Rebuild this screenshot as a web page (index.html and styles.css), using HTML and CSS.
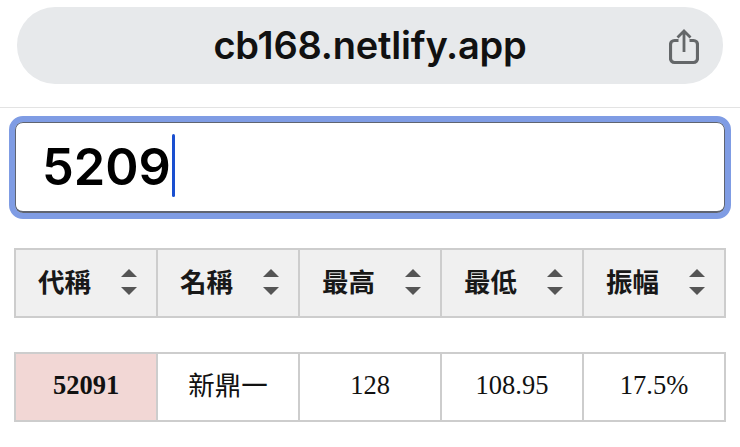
FILE: index.html
```html
<!DOCTYPE html>
<html lang="zh-Hant">
<head>
<meta charset="utf-8">
<title>cb168.netlify.app</title>
<link rel="stylesheet" href="styles.css">
</head>
<body>
<header class="browser">
  <div class="urlbar">
    <span class="url">cb168.netlify.app</span>
    <svg class="share" viewBox="0 0 30 36" width="30" height="36" aria-hidden="true">
      <path d="M9.500 11.500H5.500a4 4 0 0 0-4 4v14a4 4 0 0 0 4 4h19a4 4 0 0 0 4-4v-14a4 4 0 0 0-4-4h-4" fill="none" stroke="#646769" stroke-width="3.200"/>
      <path d="M15 23V2.500M8.500 8.500 15 2l6.500 6.500" fill="none" stroke="#646769" stroke-width="2.800"/>
    </svg>
  </div>
</header>
<main class="content">
  <div class="search"><span class="typed">5209</span><span class="caret"></span></div>
  <table class="grid head">
    <tr>
      <th><div class="th"><span>代稱</span><span class="sort"><i class="up"></i><i class="down"></i></span></div></th>
      <th><div class="th"><span>名稱</span><span class="sort"><i class="up"></i><i class="down"></i></span></div></th>
      <th><div class="th"><span>最高</span><span class="sort"><i class="up"></i><i class="down"></i></span></div></th>
      <th><div class="th"><span>最低</span><span class="sort"><i class="up"></i><i class="down"></i></span></div></th>
      <th><div class="th"><span>振幅</span><span class="sort"><i class="up"></i><i class="down"></i></span></div></th>
    </tr>
  </table>
  <table class="grid body">
    <tr>
      <td class="code">52091</td>
      <td class="name">新鼎一</td>
      <td>128</td>
      <td>108.95</td>
      <td>17.5%</td>
    </tr>
  </table>
</main>
</body>
</html>
```
FILE: styles.css
```css
* { box-sizing: border-box; }
html, body { margin: 0; height: 447px; overflow: hidden; background: #fff; }
body { font-family: "Liberation Serif", "Noto Sans CJK TC", serif; color: #111; }

.browser { height: 108px; padding: 7px 17px 0; border-bottom: 1px solid #e3e3e3; }
.urlbar {
  height: 77px;
  border-radius: 38px;
  background: #e7e9eb;
  display: flex;
  align-items: center;
  justify-content: center;
  position: relative;
}
.url {
  font-family: "Inter", "Liberation Sans", sans-serif;
  font-size: 38px;
  font-weight: 600;
  letter-spacing: -0.2px;
  color: #111;
  margin-top: -2px;
}
.share { position: absolute; right: 24px; top: 22px; }

.content { padding: 8px 14px 0; }
.search {
  height: 103px;
  margin: 0 -5px;
  border: 6px solid #7f9ce4;
  border-radius: 14px;
  background: #fff;
  box-shadow: inset 0 1px 0 #5f6470, inset 0 -2px 0 #5f6470, inset 1px 0 0 #5f6470, inset -1px 0 0 #5f6470;
  padding-left: 27px;
  display: flex;
  align-items: center;
}
.typed {
  font-family: "Inter", "Liberation Sans", sans-serif;
  font-size: 50.500px;
  font-weight: 600;
  color: #000;
  line-height: 1;
}
.caret { width: 3px; height: 63px; margin-left: 1px; margin-top: -5px; background: #1a4fd0; border-radius: 2px; }

.grid { width: 712px; table-layout: fixed; border-collapse: collapse; }
.grid th, .grid td { border: 2px solid #cdcdcd; height: 68px; padding: 0; }
.head { margin-top: 29px; }
.body { margin-top: 34px; }
.head th { background: #f0f0f0; }
.th {
  display: flex;
  align-items: center;
  justify-content: space-between;
  padding: 0 19px 0 22px;
  font-family: "Noto Sans CJK TC", sans-serif;
  font-size: 26.500px;
  font-weight: 700;
  color: #181818;
}
.th > span:first-child { margin-top: -6px; }
.sort { display: flex; flex-direction: column; gap: 10px; margin-top: -3px; }
.sort i { display: block; width: 0; height: 0; border-left: 8.500px solid transparent; border-right: 8.500px solid transparent; }
.up { border-bottom: 8.500px solid #555; }
.down { border-top: 8.500px solid #555; }

.body td { text-align: center; font-size: 26.500px; color: #111; padding-bottom: 3px; }
.body .code { background: #f2d7d5; font-weight: 700; }
.body .name { font-family: "Noto Sans CJK TC", sans-serif; font-size: 26.500px; font-weight: 400; padding-bottom: 7px; }
```
